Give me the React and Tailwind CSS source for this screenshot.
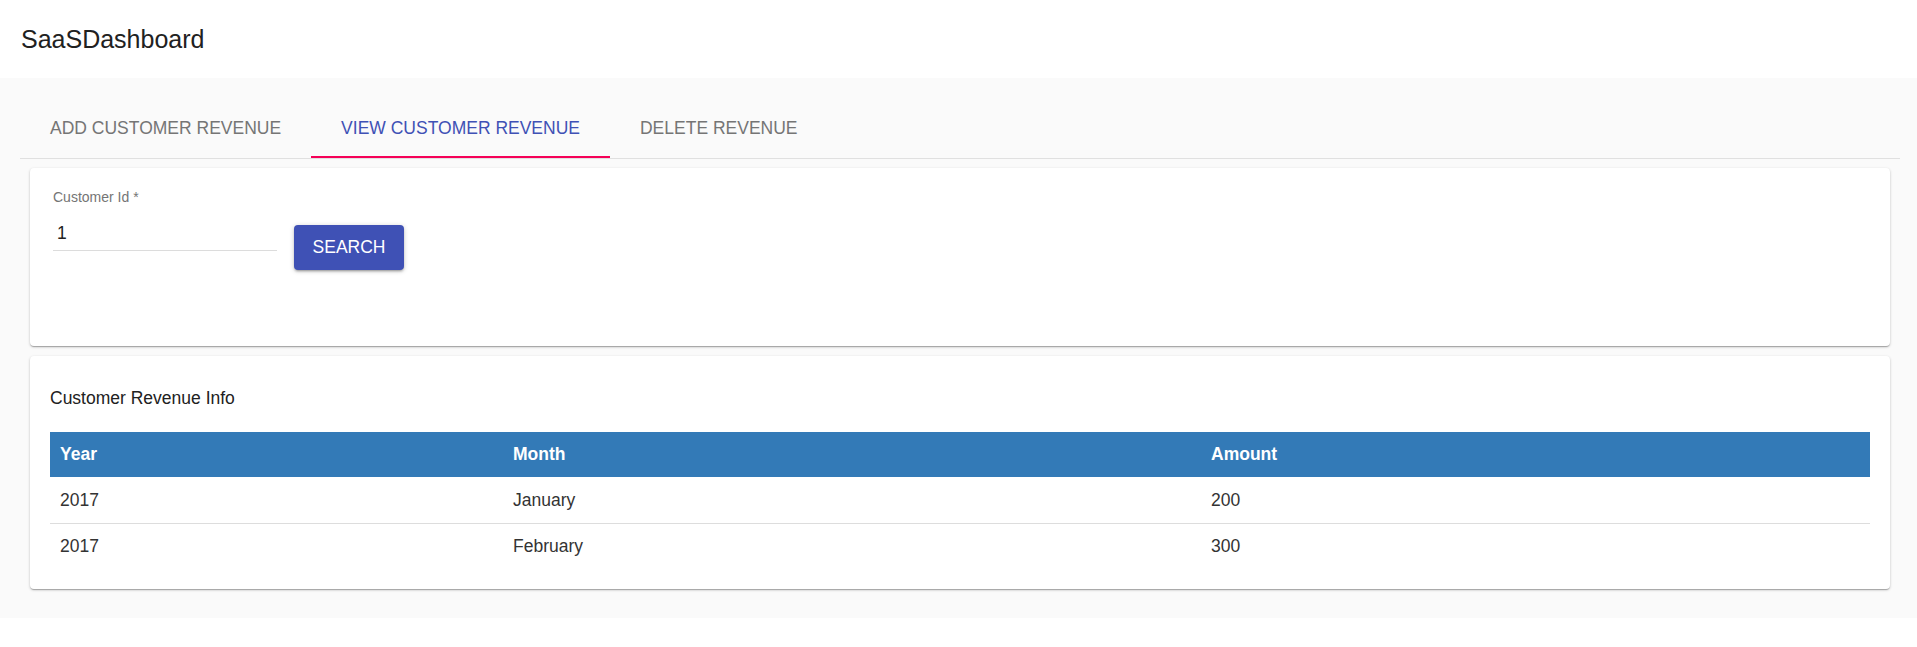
// App.jsx
const tabs = [
  { label: 'Add Customer Revenue', active: false },
  { label: 'View Customer Revenue', active: true },
  { label: 'Delete Revenue', active: false },
]

const revenue = [
  { year: 2017, month: 'January', amount: 200 },
  { year: 2017, month: 'February', amount: 300 },
]

function Card({ className = '', children }) {
  return (
    <div
      className={`bg-white rounded-[4px] shadow-[0_1px_3px_0_rgba(0,0,0,0.2),0_1px_1px_0_rgba(0,0,0,0.14),0_2px_1px_-1px_rgba(0,0,0,0.12)] ${className}`}
    >
      {children}
    </div>
  )
}

export default function App() {
  return (
    <div className="min-h-screen bg-white font-['Liberation_Sans',Arial,sans-serif]">
      <header className="h-[78px] flex items-center px-[21px]">
        <h1 className="text-[25px] leading-[30px] text-[#212121]">SaaSDashboard</h1>
      </header>

      <main className="bg-[#fafafa] pt-[20px] pb-[29px] pl-[20px] pr-[17px]">
        {/* tabs */}
        <div className="flex border-b border-[#e0e0e0]">
          {tabs.map(tab => (
            <div
              key={tab.label}
              className={`relative h-[60px] px-[30px] flex items-center uppercase text-[17.5px] ${
                tab.active ? 'text-[#3f51b5]' : 'text-[#757575]'
              }`}
            >
              {tab.label}
              {tab.active && <span className="absolute left-0 right-0 bottom-0 h-[2px] bg-[#f50057]" />}
            </div>
          ))}
        </div>

        <div className="px-[10px] pt-[9px] flex flex-col gap-[10px]">
          {/* search */}
          <Card className="h-[178px] pt-[22px] px-[23px]">
            <div className="flex items-start">
              <div className="w-[224px]">
                <label className="block text-[14px] leading-[14px] text-[#757575]">Customer Id *</label>
                <div className="mt-[17px] pb-[5px] border-b border-[#dcdcdc] text-[17.5px] leading-[24px] text-[#212121] pl-[4px]">
                  1
                </div>
              </div>
              <button className="ml-[17px] mt-[35px] w-[110px] h-[45px] rounded-[4px] bg-[#3f51b5] text-white text-[17.5px] uppercase shadow-[0_1px_5px_0_rgba(0,0,0,0.2),0_2px_2px_0_rgba(0,0,0,0.14),0_3px_1px_-2px_rgba(0,0,0,0.12)]">
                Search
              </button>
            </div>
          </Card>

          {/* results */}
          <Card className="pt-[30px] px-[20px] pb-[20px]">
            <p className="text-[17.5px] leading-[25px] text-[#212121]">Customer Revenue Info</p>
            <table className="mt-[21px] w-full table-fixed border-collapse text-[17.5px] text-[#333]">
              <thead>
                <tr className="bg-[#337ab7] h-[45px] text-white">
                  <th className="w-[453px] px-[10px] text-left font-bold">Year</th>
                  <th className="w-[698px] px-[10px] text-left font-bold">Month</th>
                  <th className="px-[10px] text-left font-bold">Amount</th>
                </tr>
              </thead>
              <tbody>
                {revenue.map((r, i) => (
                  <tr key={r.month} className={`h-[46px] ${i < revenue.length - 1 ? 'border-b border-[#dddddd]' : ''}`}>
                    <td className="px-[10px]">{r.year}</td>
                    <td className="px-[10px]">{r.month}</td>
                    <td className="px-[10px]">{r.amount}</td>
                  </tr>
                ))}
              </tbody>
            </table>
          </Card>
        </div>
      </main>
    </div>
  )
}
